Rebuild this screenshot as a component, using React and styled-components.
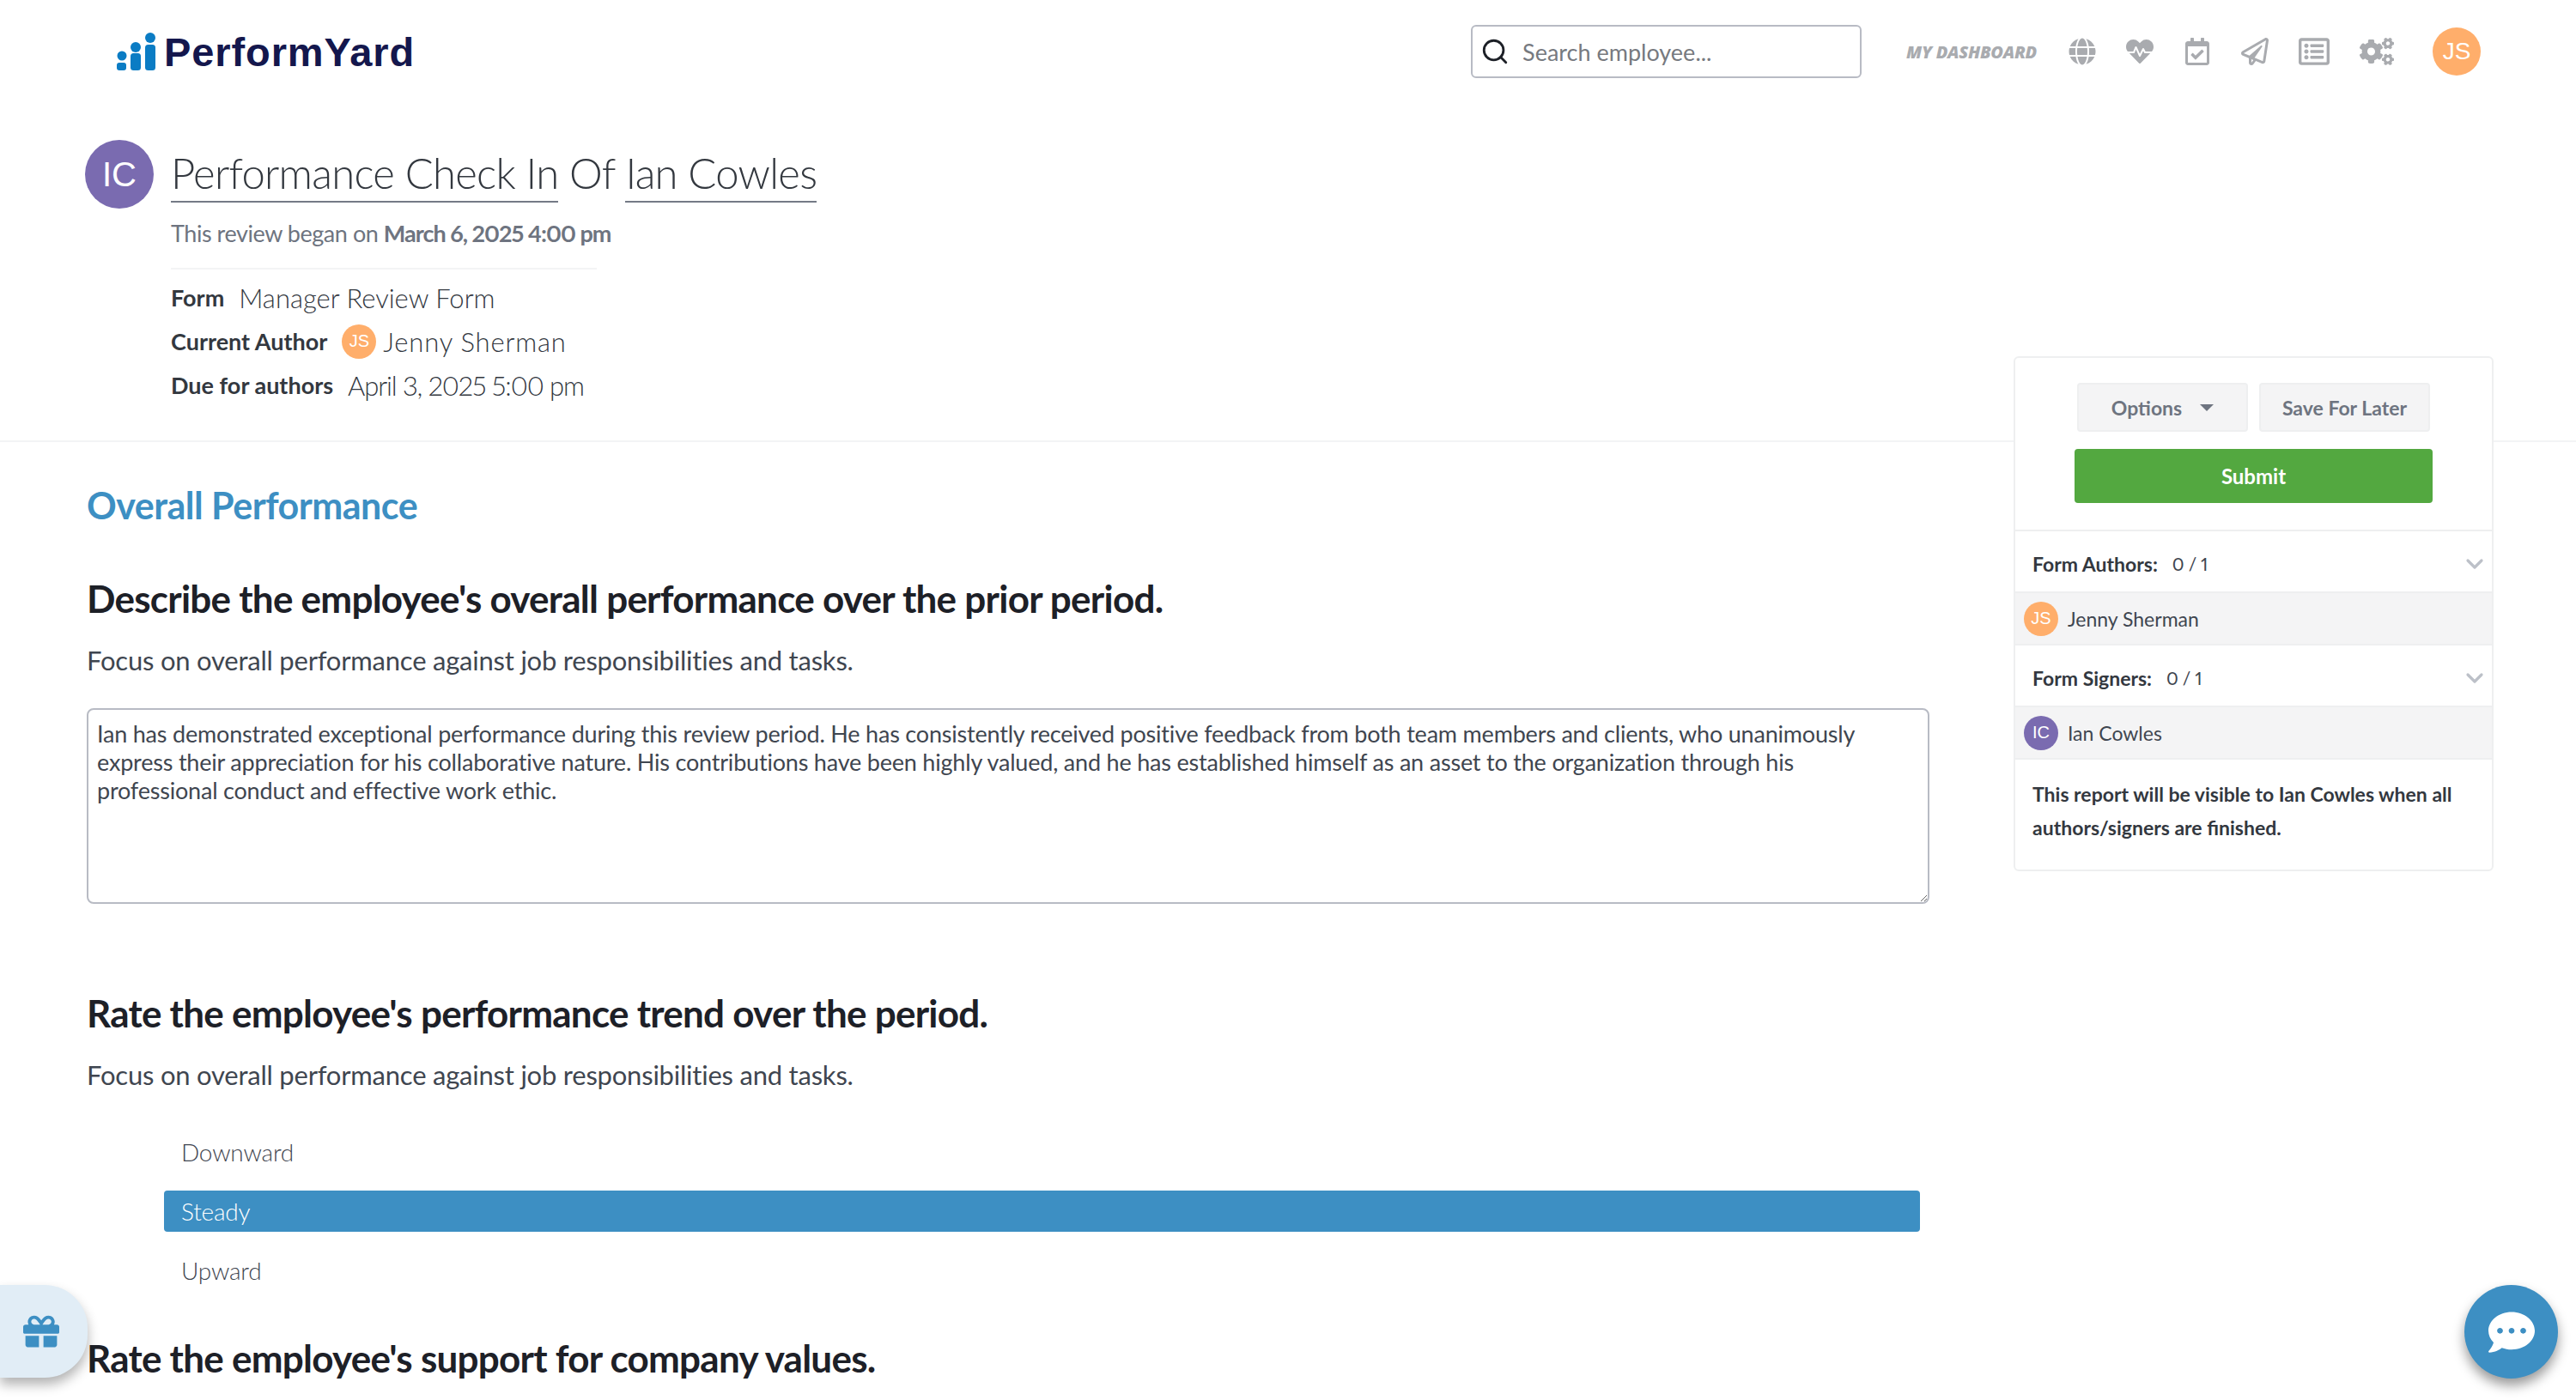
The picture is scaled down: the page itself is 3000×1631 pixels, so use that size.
import styled, { createGlobalStyle } from "styled-components";
import {
  FaCogs,
  FaCommentDots,
  FaGift,
  FaGlobe,
  FaHeartbeat,
  FaRegCalendarCheck,
  FaRegListAlt,
  FaRegPaperPlane,
} from "react-icons/fa";
import { FiChevronDown, FiSearch } from "react-icons/fi";

const GlobalStyle = createGlobalStyle`
  html, body {
    margin: 0;
    height: 100%;
    overflow: hidden;
    background: #fff;
    font-family: Lato, "Noto Sans", sans-serif;
    font-variant-numeric: proportional-nums;
    color: #3f4650;
  }
  * { box-sizing: border-box; }
`;

const Header = styled.header`
  height: 120px;
  display: flex;
  align-items: center;
  padding: 0 111px 0 136px;
`;

const Logo = styled.div`
  display: flex;
  align-items: center;
  gap: 9px;
  margin-right: auto;
  color: #14174d;
  font-family: "Liberation Sans", sans-serif;
  font-weight: 700;
  font-size: 47px;
  letter-spacing: 0.9px;
`;

const SearchBox = styled.div`
  width: 455px;
  height: 62px;
  margin-right: 52px;
  display: flex;
  align-items: center;
  gap: 15px;
  padding-left: 9px;
  border: 2px solid #b8bbc4;
  border-radius: 6px;
  color: #777a80;
  font-size: 27px;
  & svg {
    color: #1d2027;
    font-size: 34px;
  }
`;

const Nav = styled.nav`
  display: flex;
  align-items: center;
  gap: 35px;
  color: #a9abaf;
  font-size: 32px;
  & svg {
    display: block;
  }
`;

const DashLink = styled.span`
  margin-right: 2px;
  font-family: "Open Sans", sans-serif;
  font-style: italic;
  font-weight: 800;
  font-size: 20px;
  letter-spacing: -0.3px;
`;

const ListIcon = styled(FaRegListAlt)`
  font-size: 36px;
`;

const CogsIcon = styled(FaCogs)`
  font-size: 40px;
`;

const Avatar = styled.div`
  width: ${(p) => p.$size}px;
  height: ${(p) => p.$size}px;
  flex: none;
  display: flex;
  align-items: center;
  justify-content: center;
  border-radius: 50%;
  background: ${(p) => p.$bg};
  color: #fff;
  font-family: "Liberation Sans", sans-serif;
  font-size: ${(p) => Math.round(p.$size * 0.5)}px;
`;

const NavAvatar = styled(Avatar)`
  margin-left: 10px;
`;

const TitleBlock = styled.section`
  height: 395px;
  padding: 43px 0 0 99px;
  border-bottom: 2px solid #f3f4f5;
  display: flex;
  gap: 20px;
`;

const Title = styled.h1`
  margin: 2px 0 0;
  font-size: 49px;
  font-weight: 300;
  line-height: 72px;
  letter-spacing: -0.75px;
  color: #33383f;
  white-space: nowrap;
`;

const Under = styled.span`
  border-bottom: 2px solid #747a86;
  padding-bottom: 4px;
`;

const Began = styled.div`
  margin: 17px 0 7px;
  padding-bottom: 22px;
  width: 496px;
  border-bottom: 2px solid #f3f4f5;
  font-size: 27px;
  line-height: 36px;
  letter-spacing: -0.45px;
  color: #6e7480;
  white-space: nowrap;
  & b {
    font-weight: 700;
    letter-spacing: -1px;
  }
`;

const MetaRow = styled.div`
  height: 51px;
  display: flex;
  align-items: center;
  color: #33383f;
`;

const MetaLabel = styled.b`
  font-size: 27px;
  font-weight: 700;
  margin-right: 17px;
`;

const MetaValue = styled.span`
  font-size: 31px;
  font-weight: 300;
  letter-spacing: ${(p) => p.$spacing || 0}px;
`;

const MetaAvatar = styled(Avatar)`
  margin-right: 8px;
  font-size: 20px;
`;

const Body = styled.div`
  display: flex;
  align-items: flex-start;
  padding: 0 96px 0 101px;
`;

const Main = styled.main`
  width: 2146px;
  margin-right: 98px;
`;

const SectionTitle = styled.h2`
  margin: 48px 0 0;
  font-size: 43px;
  line-height: 52px;
  font-weight: 700;
  letter-spacing: -0.5px;
  color: #3d8fc3;
`;

const Question = styled.h3`
  margin: ${(p) => p.$top}px 0 0;
  font-size: 44px;
  line-height: 56px;
  font-weight: 700;
  letter-spacing: -0.75px;
  color: #1d2027;
  white-space: nowrap;
`;

const Hint = styled.p`
  margin: 24px 0 0;
  font-size: 31px;
  line-height: 40px;
  letter-spacing: -0.22px;
  color: #3f4650;
`;

const AnswerBox = styled.textarea`
  display: block;
  width: 100%;
  height: 228px;
  margin-top: 36px;
  padding: 11px 48px 12px 10px;
  border: 2px solid #b8bbc4;
  border-radius: 8px;
  font-family: Lato, sans-serif;
  font-variant-numeric: proportional-nums;
  font-size: 27px;
  line-height: 33px;
  letter-spacing: -0.2px;
  color: #3f4650;
  resize: vertical;
  outline: none;
`;

const Choices = styled.div`
  margin: 46px 11px 0 90px;
  display: flex;
  flex-direction: column;
  gap: 21px;
`;

const Choice = styled.div`
  height: 48px;
  display: flex;
  align-items: center;
  padding-left: 20px;
  border-radius: 4px;
  font-size: 28px;
  font-weight: 300;
  letter-spacing: -0.2px;
  color: ${(p) => (p.$active ? "#fff" : "#3f4650")};
  background: ${(p) => (p.$active ? "#3d8fc3" : "transparent")};
`;

const Panel = styled.aside`
  width: 559px;
  margin-top: -100px;
  flex: none;
  background: #fff;
  border: 2px solid #eeeff0;
  border-radius: 6px;
`;

const Actions = styled.div`
  padding: 29px 0 31px;
  display: flex;
  flex-direction: column;
  align-items: center;
  gap: 20px;
`;

const ActionRow = styled.div`
  display: flex;
  gap: 13px;
`;

const GreyButton = styled.button`
  width: 199px;
  height: 57px;
  display: flex;
  align-items: center;
  justify-content: center;
  gap: 21px;
  background: #f4f4f5;
  border: 2px solid #eeeff0;
  border-radius: 4px;
  font-family: Lato, sans-serif;
  font-weight: 700;
  font-size: 23px;
  color: #6e7480;
`;

const Caret = styled.span`
  width: 0;
  height: 0;
  border-left: 8px solid transparent;
  border-right: 8px solid transparent;
  border-top: 8px solid #6e7480;
`;

const SubmitButton = styled.button`
  width: 417px;
  height: 63px;
  background: #53a840;
  border: 0;
  border-radius: 4px;
  color: #fff;
  font-family: Lato, sans-serif;
  font-weight: 700;
  font-size: 24px;
`;

const GroupHead = styled.div`
  height: 72px;
  display: flex;
  align-items: center;
  gap: 17px;
  padding: 5px 4px 0 20px;
  border-top: 2px solid #eeeff0;
  font-size: 23px;
  color: #33383f;
  & svg {
    margin-left: auto;
    color: #bcc0c8;
    font-size: 32px;
    stroke-width: 2.4;
  }
`;

const Count = styled.span`
  font-size: 21px;
  letter-spacing: -0.2px;
  color: #3f4650;
`;

const PersonRow = styled.div`
  height: 63px;
  display: flex;
  align-items: center;
  gap: 11px;
  padding-left: 10px;
  background: #f4f4f5;
  border-top: 2px solid #eeeff0;
  border-bottom: 2px solid #eeeff0;
  margin-bottom: -2px;
  font-size: 23px;
  color: #3f4650;
`;

const Notice = styled.p`
  margin: 0;
  padding: 21px 20px 29px;
  border-top: 2px solid #eeeff0;
  font-size: 23px;
  font-weight: 700;
  line-height: 39px;
  color: #33383f;
`;

const GiftTab = styled.div`
  position: fixed;
  left: 0;
  top: 1497px;
  width: 102px;
  height: 108px;
  display: flex;
  align-items: center;
  justify-content: center;
  padding-right: 6px;
  background: #e1edf6;
  border-radius: 0 50px 50px 0;
  box-shadow: 0 8px 14px rgba(0, 0, 0, 0.3);
  color: #3d8fc3;
  font-size: 42px;
`;

const ChatBubble = styled.div`
  position: fixed;
  left: 2870px;
  top: 1497px;
  width: 109px;
  height: 109px;
  display: flex;
  align-items: center;
  justify-content: center;
  border-radius: 50%;
  background: #3d8fc3;
  box-shadow: 0 8px 14px rgba(0, 0, 0, 0.4);
  color: #fff;
  font-size: 54px;
`;

function LogoMark() {
  return (
    <svg width="46" height="44" viewBox="0 0 46 44" fill="#0b7cc4">
      <circle cx="6" cy="27" r="5.5" />
      <rect x="0" y="35" width="11" height="9" rx="3" />
      <circle cx="22" cy="17" r="6" />
      <rect x="16" y="24" width="12" height="20" rx="3.5" />
      <circle cx="39" cy="6" r="6" />
      <rect x="33" y="14" width="12" height="30" rx="3.5" />
    </svg>
  );
}

export default function App() {
  return (
    <>
      <GlobalStyle />
      <Header>
        <Logo>
          <LogoMark />
          PerformYard
        </Logo>
        <SearchBox>
          <FiSearch />
          Search employee...
        </SearchBox>
        <Nav>
          <DashLink>MY DASHBOARD</DashLink>
          <FaGlobe />
          <FaHeartbeat />
          <FaRegCalendarCheck />
          <FaRegPaperPlane />
          <ListIcon />
          <CogsIcon />
          <NavAvatar $size={56} $bg="#ffae6b">JS</NavAvatar>
        </Nav>
      </Header>

      <TitleBlock>
        <Avatar $size={80} $bg="#7a6bb0">IC</Avatar>
        <div>
          <Title>
            <Under>Performance Check In</Under> Of <Under>Ian Cowles</Under>
          </Title>
          <Began>
            This review began on <b>March 6, 2025 4:00 pm</b>
          </Began>
          <MetaRow>
            <MetaLabel>Form</MetaLabel>
            <MetaValue>Manager Review Form</MetaValue>
          </MetaRow>
          <MetaRow>
            <MetaLabel>Current Author</MetaLabel>
            <MetaAvatar $size={40} $bg="#ffae6b">JS</MetaAvatar>
            <MetaValue $spacing={0.8}>Jenny Sherman</MetaValue>
          </MetaRow>
          <MetaRow>
            <MetaLabel>Due for authors</MetaLabel>
            <MetaValue $spacing={-1.1}>April 3, 2025 5:00 pm</MetaValue>
          </MetaRow>
        </div>
      </TitleBlock>

      <Body>
        <Main>
          <SectionTitle>Overall Performance</SectionTitle>
          <Question $top={54}>
            Describe the employee's overall performance over the prior period.
          </Question>
          <Hint>Focus on overall performance against job responsibilities and tasks.</Hint>
          <AnswerBox
            readOnly
            value="Ian has demonstrated exceptional performance during this review period. He has consistently received positive feedback from both team members and clients, who unanimously express their appreciation for his collaborative nature. His contributions have been highly valued, and he has established himself as an asset to the organization through his professional conduct and effective work ethic."
          />
          <Question $top={99}>
            Rate the employee's performance trend over the period.
          </Question>
          <Hint>Focus on overall performance against job responsibilities and tasks.</Hint>
          <Choices>
            <Choice>Downward</Choice>
            <Choice $active>Steady</Choice>
            <Choice>Upward</Choice>
          </Choices>
          <Question $top={50}>Rate the employee's support for company values.</Question>
        </Main>

        <Panel>
          <Actions>
            <ActionRow>
              <GreyButton>
                Options
                <Caret />
              </GreyButton>
              <GreyButton>Save For Later</GreyButton>
            </ActionRow>
            <SubmitButton>Submit</SubmitButton>
          </Actions>
          <GroupHead>
            <b>Form Authors:</b> <Count>0 / 1</Count>
            <FiChevronDown />
          </GroupHead>
          <PersonRow>
            <Avatar $size={40} $bg="#ffae6b">JS</Avatar>
            Jenny Sherman
          </PersonRow>
          <GroupHead>
            <b>Form Signers:</b> <Count>0 / 1</Count>
            <FiChevronDown />
          </GroupHead>
          <PersonRow>
            <Avatar $size={40} $bg="#7a6bb0">IC</Avatar>
            Ian Cowles
          </PersonRow>
          <Notice>
            This report will be visible to Ian Cowles when all authors/signers are finished.
          </Notice>
        </Panel>
      </Body>

      <GiftTab>
        <FaGift />
      </GiftTab>
      <ChatBubble>
        <FaCommentDots />
      </ChatBubble>
    </>
  );
}
